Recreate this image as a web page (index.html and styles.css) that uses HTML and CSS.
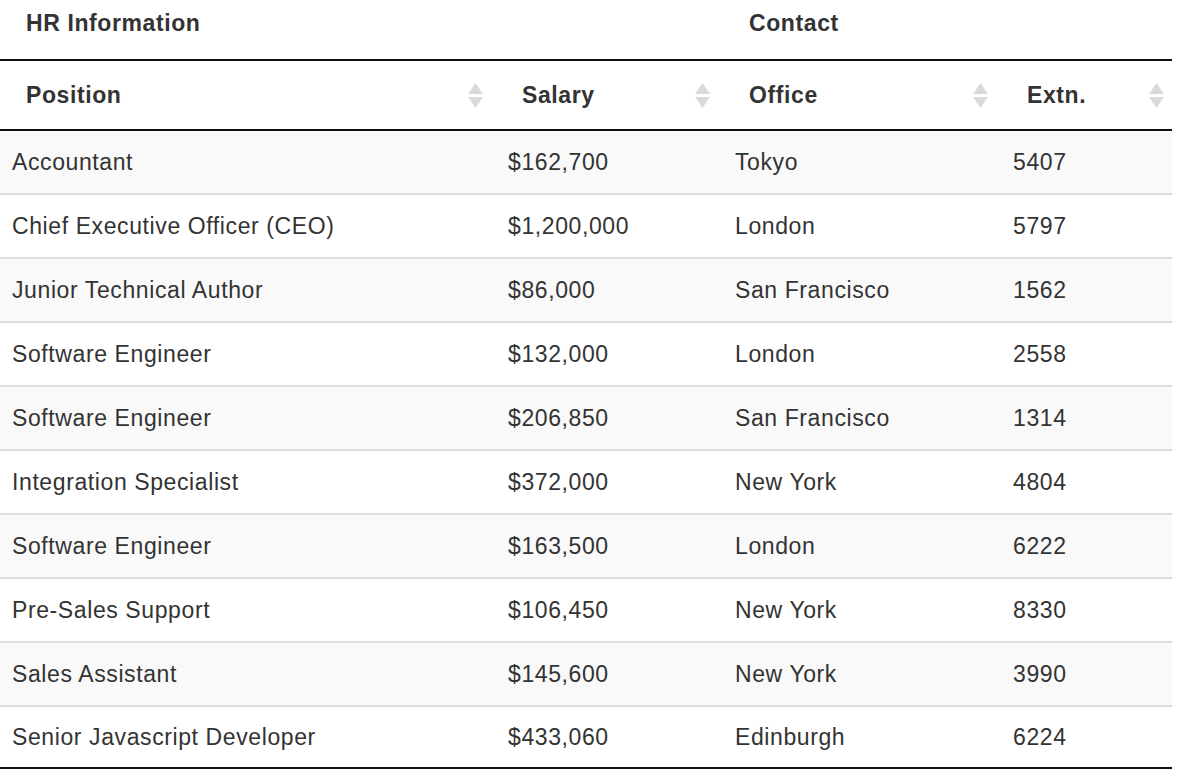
FILE: index.html
```html
<!DOCTYPE html>
<html lang="en">
<head>
<meta charset="utf-8">
<title>HR Information</title>
<link rel="stylesheet" href="styles.css">
</head>
<body>
<table class="grid">
  <colgroup>
    <col class="c-pos">
    <col class="c-sal">
    <col class="c-off">
    <col class="c-ext">
  </colgroup>
  <thead>
    <tr class="group-row">
      <th colspan="2" class="first">HR Information</th>
      <th colspan="2">Contact</th>
    </tr>
    <tr class="head-row">
      <th class="first"><div class="th-inner"><span>Position</span><svg class="sort" viewBox="0 0 15 25" width="15" height="25"><polygon points="7.5,0 15,11 0,11"/><polygon points="0,14 15,14 7.5,25"/></svg></div></th>
      <th><div class="th-inner"><span>Salary</span><svg class="sort" viewBox="0 0 15 25" width="15" height="25"><polygon points="7.5,0 15,11 0,11"/><polygon points="0,14 15,14 7.5,25"/></svg></div></th>
      <th><div class="th-inner"><span>Office</span><svg class="sort" viewBox="0 0 15 25" width="15" height="25"><polygon points="7.5,0 15,11 0,11"/><polygon points="0,14 15,14 7.5,25"/></svg></div></th>
      <th><div class="th-inner"><span>Extn.</span><svg class="sort" viewBox="0 0 15 25" width="15" height="25"><polygon points="7.5,0 15,11 0,11"/><polygon points="0,14 15,14 7.5,25"/></svg></div></th>
    </tr>
  </thead>
  <tbody>
    <tr><td class="first">Accountant</td><td>$162,700</td><td>Tokyo</td><td>5407</td></tr>
    <tr><td class="first">Chief Executive Officer (CEO)</td><td>$1,200,000</td><td>London</td><td>5797</td></tr>
    <tr><td class="first">Junior Technical Author</td><td>$86,000</td><td>San Francisco</td><td>1562</td></tr>
    <tr><td class="first">Software Engineer</td><td>$132,000</td><td>London</td><td>2558</td></tr>
    <tr><td class="first">Software Engineer</td><td>$206,850</td><td>San Francisco</td><td>1314</td></tr>
    <tr><td class="first">Integration Specialist</td><td>$372,000</td><td>New York</td><td>4804</td></tr>
    <tr><td class="first">Software Engineer</td><td>$163,500</td><td>London</td><td>6222</td></tr>
    <tr><td class="first">Pre-Sales Support</td><td>$106,450</td><td>New York</td><td>8330</td></tr>
    <tr><td class="first">Sales Assistant</td><td>$145,600</td><td>New York</td><td>3990</td></tr>
    <tr><td class="first">Senior Javascript Developer</td><td>$433,060</td><td>Edinburgh</td><td>6224</td></tr>
  </tbody>
</table>
</body>
</html>
```
FILE: styles.css
```css
html, body {
  margin: 0;
  padding: 0;
  background: #ffffff;
}

body {
  font-family: "Liberation Sans", Arial, Helvetica, sans-serif;
  color: #333333;
  font-size: 23px;
  letter-spacing: 0.6px;
}

.grid {
  width: 1172px;
  table-layout: fixed;
  border-collapse: separate;
  border-spacing: 0;
}

.c-pos { width: 491px; }
.c-sal { width: 227px; }
.c-off { width: 278px; }
.c-ext { width: 176px; }

.grid th,
.grid td {
  text-align: left;
  line-height: 26px;
  white-space: nowrap;
  vertical-align: top;
}

.grid th {
  font-weight: bold;
  color: #333333;
  padding-left: 31px;
  padding-right: 8px;
}

.grid th.first {
  padding-left: 26px;
}

.group-row th {
  padding-top: 10px;
  padding-bottom: 23px;
  border-bottom: 2px solid #111111;
}

.head-row th {
  padding-top: 21px;
  padding-bottom: 21px;
  border-bottom: 2px solid #111111;
}

.th-inner {
  display: flex;
  align-items: center;
  justify-content: space-between;
}

.sort {
  display: block;
  flex: none;
  fill: #dadada;
}

.grid td {
  padding: 18px 8px 18px 17px;
  border-top: 2px solid #dddddd;
}

.grid td.first {
  padding-left: 12px;
}

.grid tbody tr:first-child td {
  border-top: none;
}

.grid tbody tr:nth-child(odd) td {
  background: #f9f9f9;
}

.grid tbody tr:last-child td {
  padding-top: 17px;
  padding-bottom: 17px;
  border-bottom: 2px solid #111111;
}
```
